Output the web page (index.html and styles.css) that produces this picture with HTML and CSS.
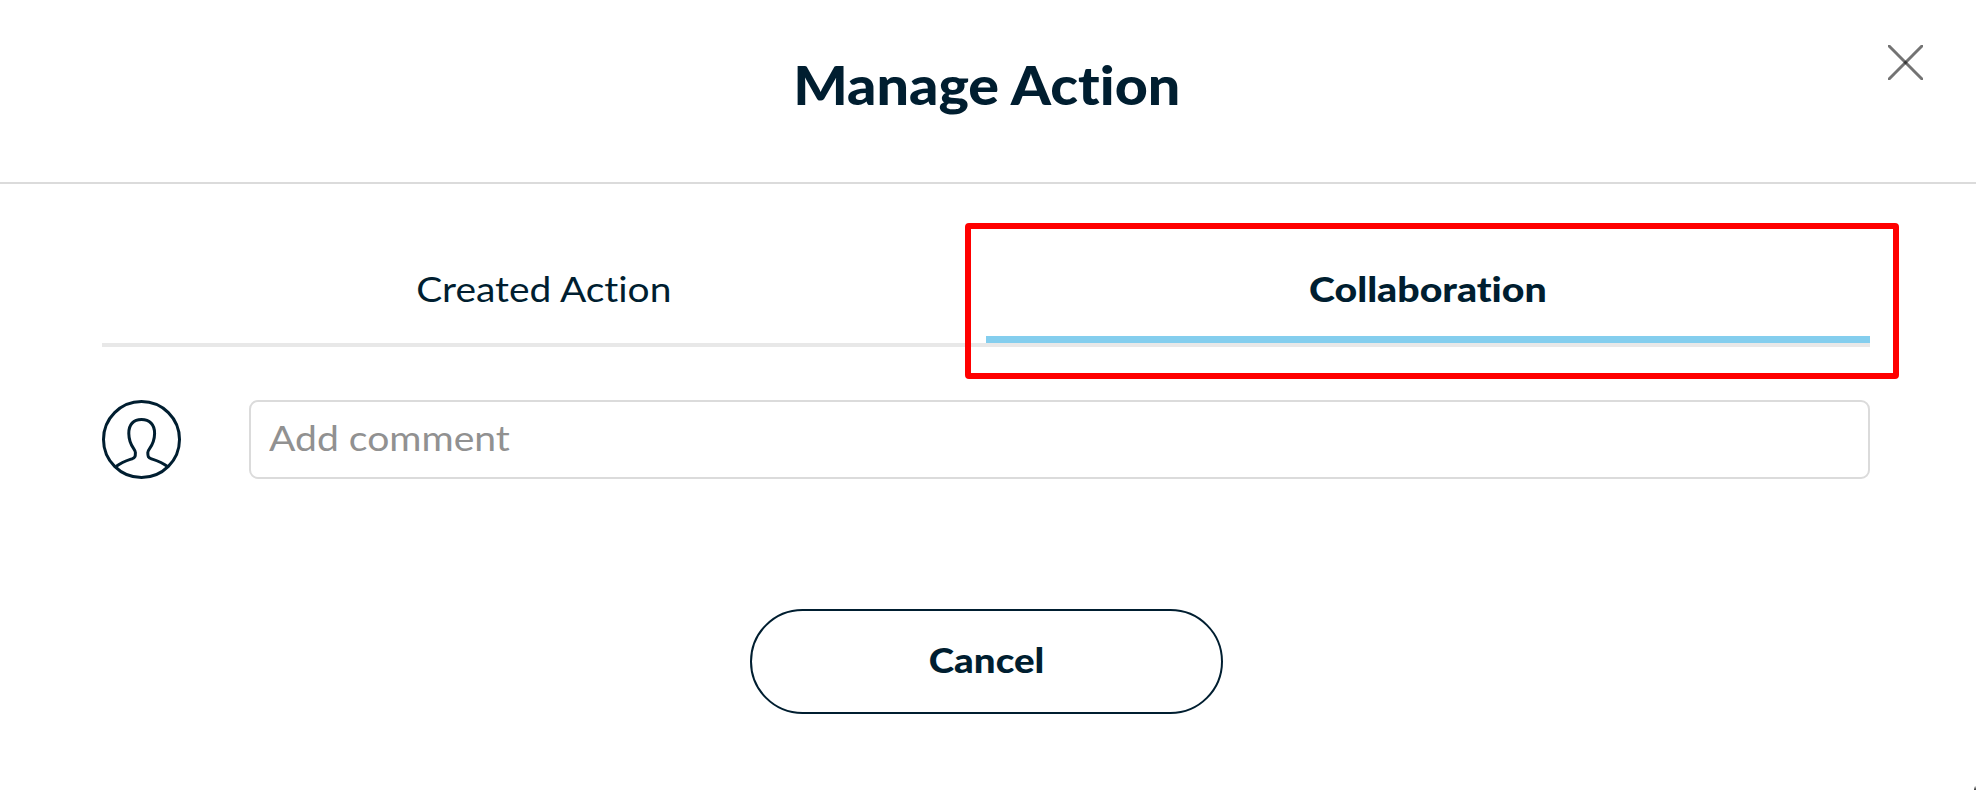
FILE: index.html
```html
<!DOCTYPE html>
<html lang="en">
<head>
<meta charset="utf-8">
<title>Manage Action</title>
<link rel="stylesheet" href="styles.css">
</head>
<body>
<main class="dialog">
  <header class="header">
    <h1 class="title">Manage Action</h1>
    <button class="close" aria-label="Close">
      <svg width="35" height="35" viewBox="0 0 35 35"><g stroke="#000" stroke-opacity=".55" stroke-width="3"><path d="M0 0 35 35"/><path d="M35 0 0 35"/></g></svg>
    </button>
  </header>
  <nav class="tabs">
    <a class="tab"><span class="label-created">Created Action</span></a>
    <a class="tab tab-active"><span class="label-collab">Collaboration</span><span class="highlight"></span></a>
  </nav>
  <section class="comment">
    <svg class="avatar" width="79" height="79" viewBox="0 0 79 79" fill="none" stroke="#001e30" stroke-width="3">
      <circle cx="39.5" cy="39.5" r="38"/>
      <path d="M14 66.5C20 62 25 60.5 30 58.8C33.3 57.7 33.4 56.5 33.4 52.5C33.4 48.5 27 46.5 26.8 33.5C26.7 24.5 31.5 19.5 39.5 19.5S52.7 24.5 52.6 33.5C52.4 46.5 45.8 48.5 45.8 52.5C45.8 56.5 46.1 57.7 49.4 58.8C54.5 60.5 59.5 62 65.5 66.5"/>
    </svg>
    <div class="field"><span class="placeholder">Add comment</span></div>
  </section>
  <footer class="actions">
    <button class="cancel"><span class="label-cancel">Cancel</span></button>
  </footer>
  <span class="corner"></span>
</main>
</body>
</html>
```
FILE: styles.css
```css
* { box-sizing: border-box; }
body { margin: 0; background: #fff; }
.dialog {
  position: relative;
  width: 1976px;
  height: 790px;
  overflow: hidden;
  color: #001e30;
  font-family: Lato, "Open Sans", sans-serif;
  font-size: 35px;
  line-height: 42px;
  font-variant-ligatures: none;
}
.header {
  position: relative;
  display: flex;
  justify-content: center;
  height: 184px;
  padding: 53px 3px 0 0;
  border-bottom: 2px solid #dbdbdb;
}
.title { margin: 0; font-size: 53px; line-height: 64px; font-weight: 900; transform: scaleX(1.083); }
.close {
  position: absolute;
  top: 45px;
  right: 53px;
  padding: 0;
  border: 0;
  background: none;
}
.close svg { display: block; }
.tabs {
  display: grid;
  grid-template-columns: 1fr 1fr;
  margin: 39px 106px 0 102px;
  height: 124px;
  border-bottom: 4px solid #e8e8e8;
}
.tab { position: relative; display: flex; justify-content: center; padding-top: 44px; }
.label-created { transform: scaleX(1.112); }
.label-collab { transform: scaleX(1.123); }
.tab-active { border-bottom: 7px solid #84ceee; font-weight: 900; }
.highlight {
  position: absolute;
  inset: 0 -29px -43px -21px;
  border: 6px solid #f00;
  border-radius: 4px;
}
.comment { display: flex; justify-content: space-between; margin: 53px 106px 0 102px; }
.field {
  width: 1621px;
  height: 79px;
  padding: 14px 18px;
  border: 2px solid #dbdbdb;
  border-radius: 9px;
  color: #919191;
}
.placeholder { display: inline-block; transform: scaleX(1.117); transform-origin: left; }
.actions { display: flex; justify-content: center; margin-top: 130px; padding-right: 3px; }
.cancel {
  width: 473px;
  height: 105px;
  padding: 0 0 5px;
  border: 2px solid #001e30;
  border-radius: 53px;
  background: #fff;
  color: inherit;
  font: inherit;
  font-weight: 900;
}
.label-cancel { display: inline-block; transform: scaleX(1.1); }
.corner {
  position: absolute;
  right: 0;
  bottom: 0;
  width: 2px;
  height: 4px;
  background: linear-gradient(150deg, #fff 10%, #444 75%);
}
```
